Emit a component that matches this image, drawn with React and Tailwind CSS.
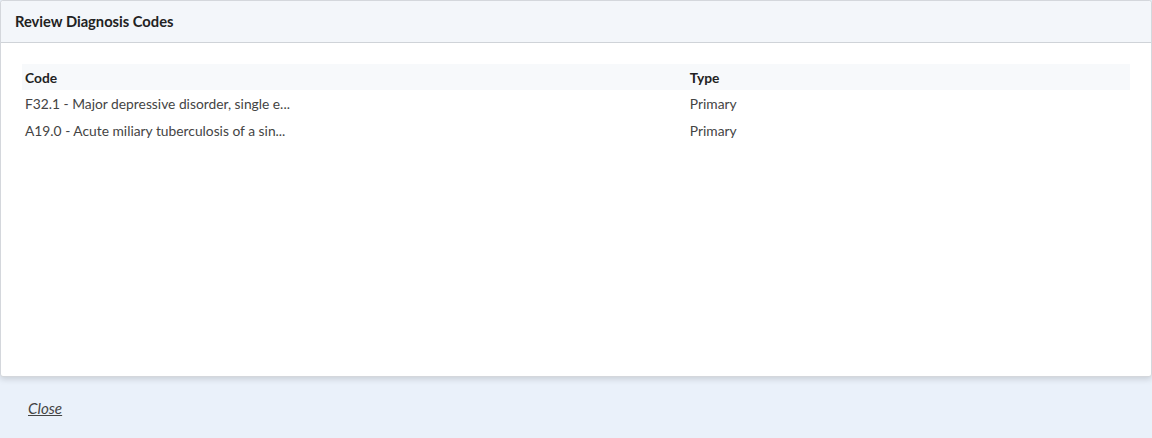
export default function App() {
  const rows = [
    { code: "F32.1 - Major depressive disorder, single e...", type: "Primary" },
    { code: "A19.0 - Acute miliary tuberculosis of a sin...", type: "Primary" },
  ];

  return (
    <div className="h-[438px] bg-[#eaf1fa] font-['Lato',sans-serif] text-[13.8px] text-[#333]">
      <div className="h-[377px] flex flex-col bg-white border border-[#d4d7dc] rounded-[3px] shadow-[0_2px_6px_rgba(0,0,0,0.15)]">
        <div className="h-[42px] flex items-center px-[14px] bg-[#f3f6fa] border-b border-[#cfd3d8] rounded-t-[3px]">
          <h2 className="font-bold text-[14.7px] text-[#222]">Review Diagnosis Codes</h2>
        </div>
        <div className="pt-[21px] pl-[21px] pr-[21px]">
          <table className="w-full border-collapse">
            <thead>
              <tr className="bg-[#f7f9fb] h-[26px]">
                <th className="w-[60%] text-left font-bold px-[3px] pt-[2px] text-[#222]">Code</th>
                <th className="text-left font-bold px-[3px] pt-[2px] text-[#222]">Type</th>
              </tr>
            </thead>
            <tbody>
              {rows.map((r) => (
                <tr key={r.code} className="h-[27px]">
                  <td className="px-[3px] pt-[1px] text-[#444]">{r.code}</td>
                  <td className="px-[3px] pt-[1px] text-[#444]">{r.type}</td>
                </tr>
              ))}
            </tbody>
          </table>
        </div>
      </div>
      <div className="pl-[28px] pt-[20px]">
        <a href="#" className="italic underline text-[15.2px] text-[#444]">Close</a>
      </div>
    </div>
  );
}
